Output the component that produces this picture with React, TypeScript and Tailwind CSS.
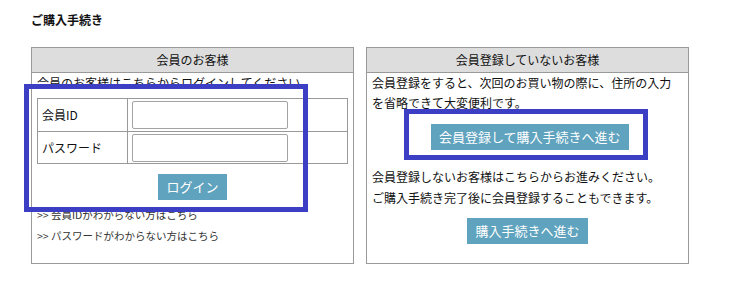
const font = { fontFamily: '"Noto Sans CJK JP", "Noto Sans", sans-serif' };

function Field({ label, type, first }: { label: string; type: string; first?: boolean }) {
  return (
    <div className={`flex h-[32px] ${first ? "" : "border-t border-[#999]"}`}>
      <div className="w-[90px] shrink-0 border-r border-[#999] pl-[4px] flex items-center text-[12px] text-[#111]">
        {label}
      </div>
      <div className="flex items-center pl-[4px]">
        <input type={type} className="w-[156px] h-[28px] border border-[#a3a3a3] rounded-[2px] bg-white outline-none" />
      </div>
    </div>
  );
}

function PanelHeader({ children }: { children: string }) {
  return (
    <div className="h-[25px] bg-[#dddddd] border-b border-[#999] flex items-center justify-center text-[12px] text-[#111]">
      {children}
    </div>
  );
}

export default function App() {
  return (
    <div className="w-[730px] h-[301px] bg-white pl-[31px] pt-[11px]" style={font}>
      <h1 className="text-[12px] font-bold leading-[18px] text-[#111] mb-[18px]">ご購入手続き</h1>

      <div className="flex gap-[12px]">
        {/* member login */}
        <div className="w-[323px] h-[217px] border border-[#999]">
          <PanelHeader>会員のお客様</PanelHeader>
          <div className="px-[5px]">
            <p className="text-[12px] leading-[20px] text-[#111] whitespace-nowrap">会員のお客様はこちらからログインしてください。</p>
            <div className="relative z-10 bg-white mt-[-9px] h-[128px] pt-[14px]">
              <div className="border border-[#999]">
                <Field label="会員ID" type="text" first />
                <Field label="パスワード" type="password" />
              </div>
              <div className="flex justify-center mt-[10px]">
                <button className="h-[26px] px-[8px] bg-[#5fa3be] text-white text-[13px]">ログイン</button>
              </div>
              <div className="absolute left-[-13px] top-0 w-[284px] h-[128px] border-[5px] border-[#3c3fc4] pointer-events-none" />
            </div>
            <div className="mt-[-8px] text-[10.5px] leading-[21px] text-[#333]">
              <div>&gt;&gt; 会員IDがわからない方はこちら</div>
              <div>&gt;&gt; パスワードがわからない方はこちら</div>
            </div>
          </div>
        </div>

        {/* guest */}
        <div className="w-[323px] h-[217px] border border-[#999]">
          <PanelHeader>会員登録していないお客様</PanelHeader>
          <div className="px-[5px]">
            <p className="text-[12px] leading-[20px] text-[#111]">
              会員登録をすると、次回のお買い物の際に、住所の入力
              <br />
              を省略できて大変便利です。
            </p>
            <div className="mt-[-4px] ml-[32px] w-[244px] h-[51px] border-[5px] border-[#3c3fc4] pt-[9px] pl-[22px]">
              <button className="h-[26px] px-[8px] bg-[#5fa3be] text-white text-[13px] whitespace-nowrap">
                会員登録して購入手続きへ進む
              </button>
            </div>
            <p className="mt-[6px] text-[12px] leading-[21px] text-[#111]">
              会員登録しないお客様はこちらからお進みください。
              <br />
              ご購入手続き完了後に会員登録することもできます。
            </p>
            <div className="flex justify-center mt-[10px]">
              <button className="h-[26px] px-[8px] bg-[#5fa3be] text-white text-[13px]">購入手続きへ進む</button>
            </div>
          </div>
        </div>
      </div>
    </div>
  );
}
